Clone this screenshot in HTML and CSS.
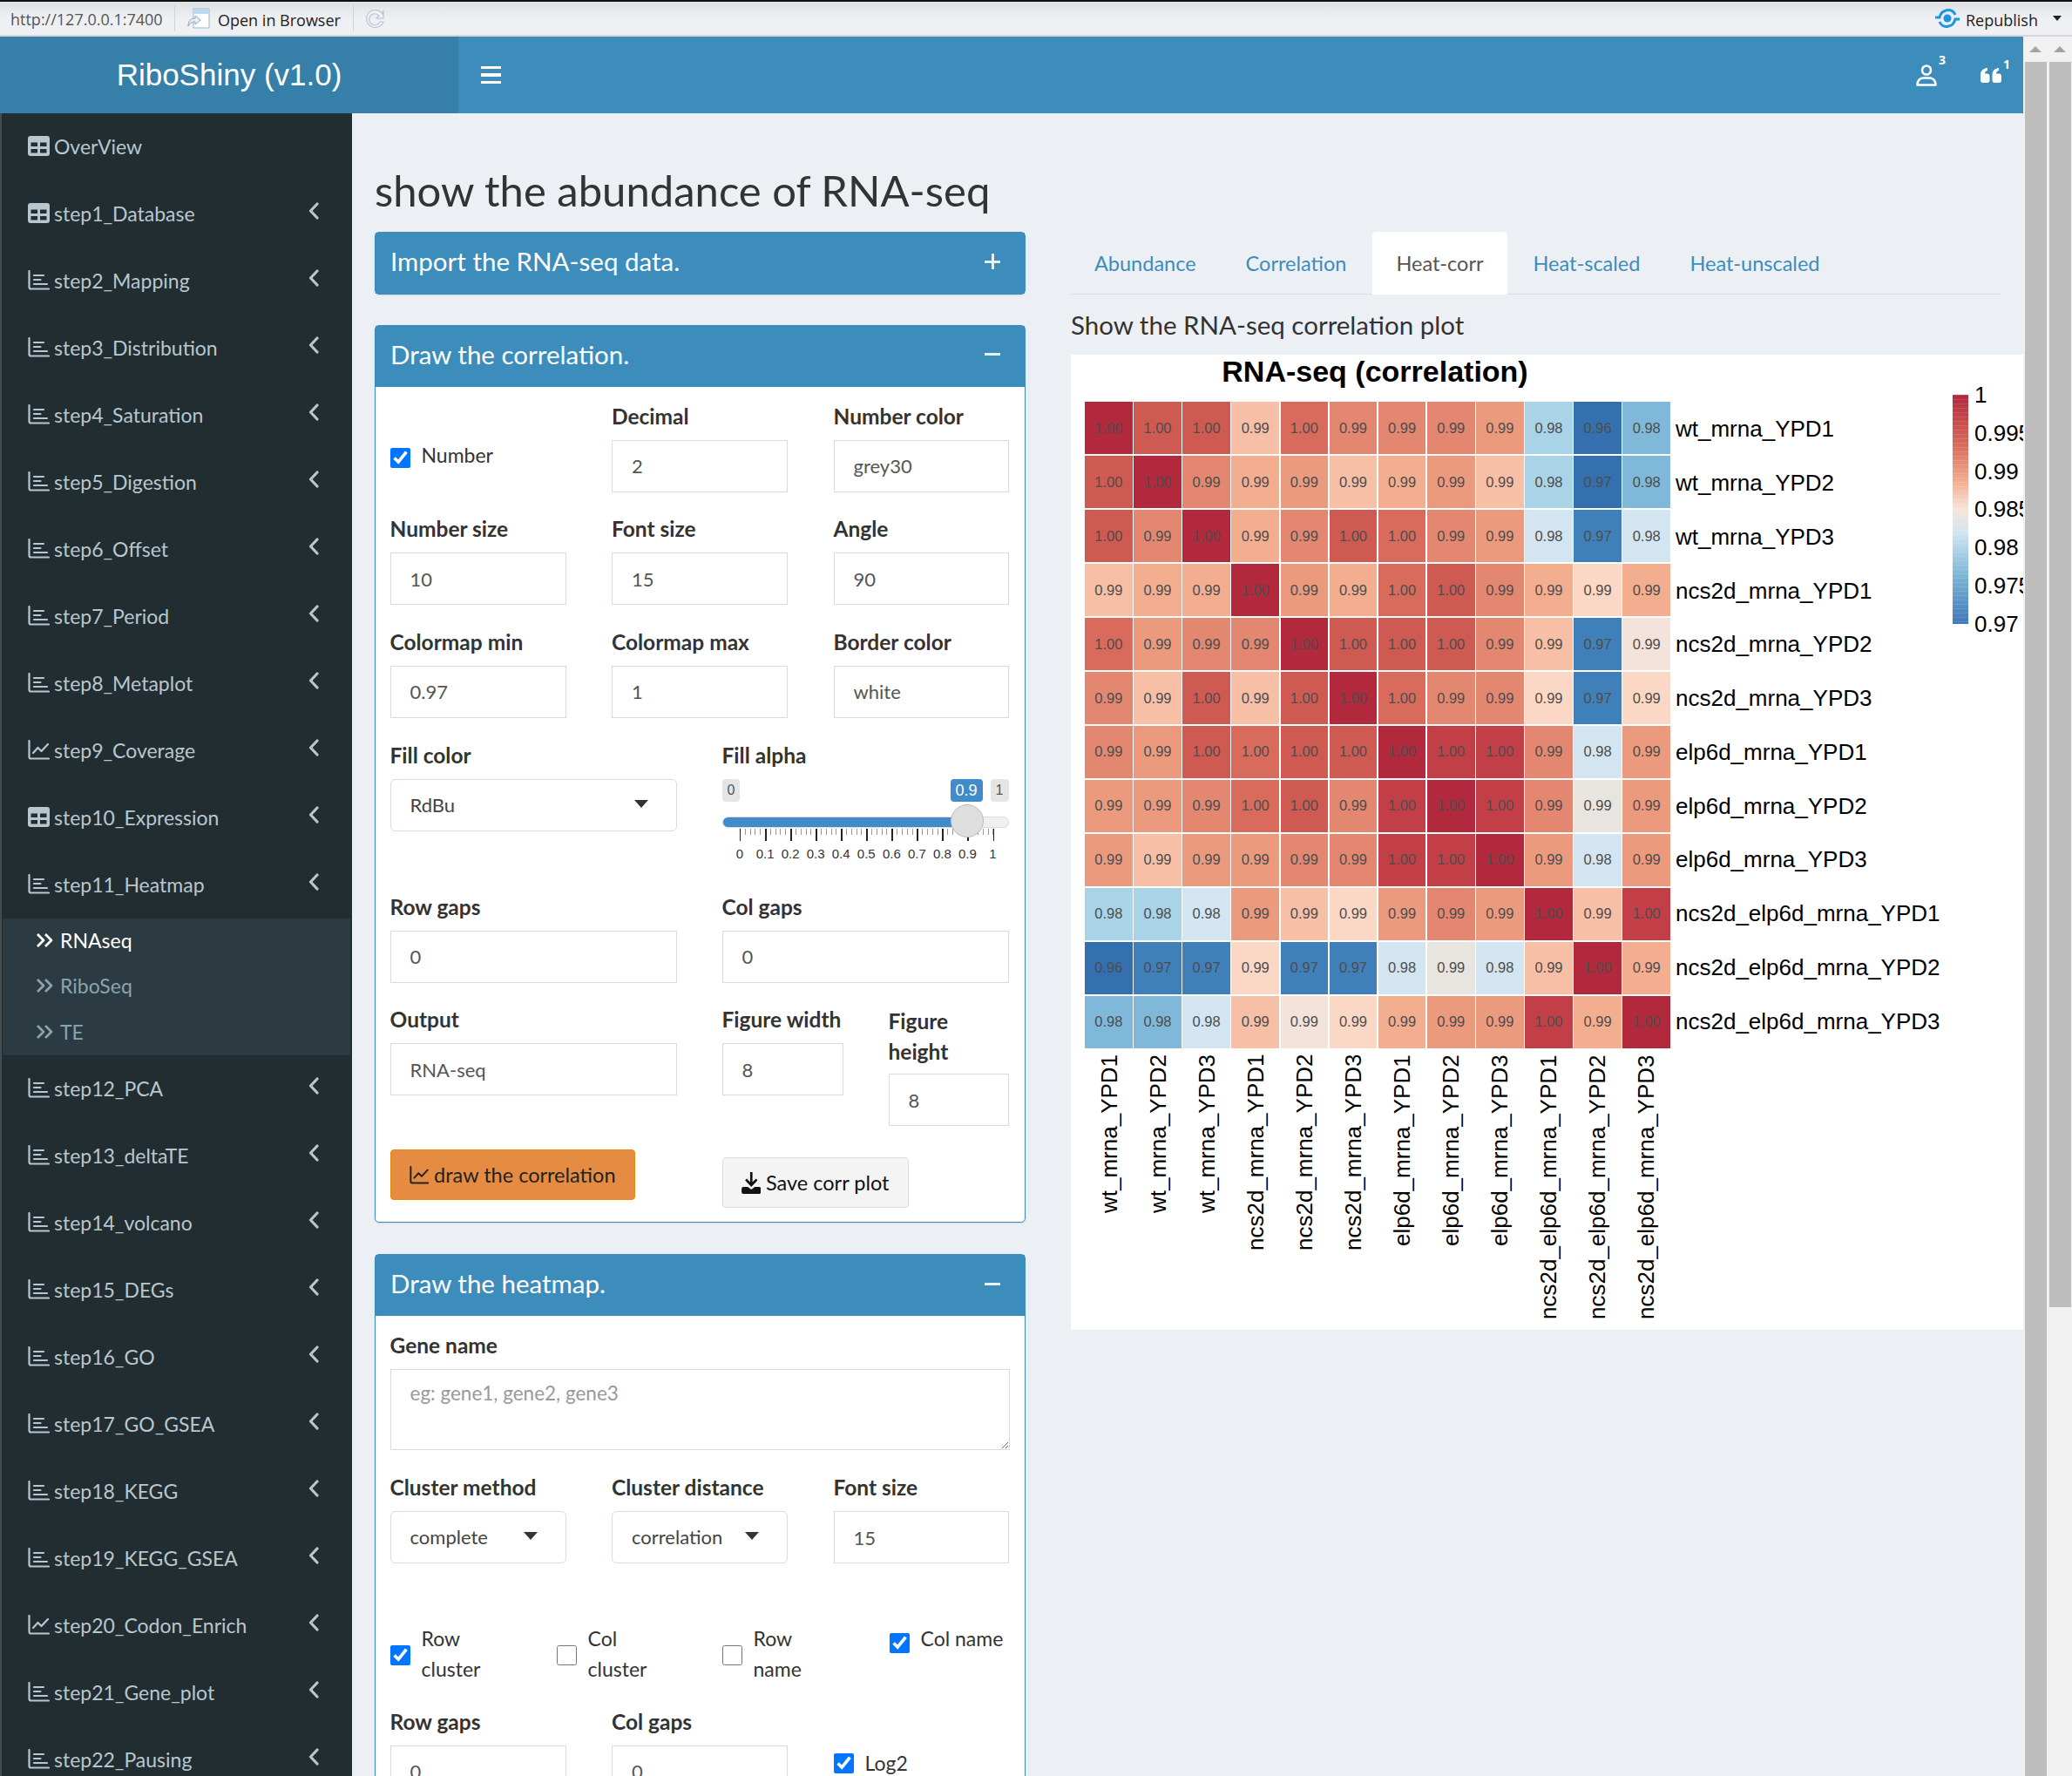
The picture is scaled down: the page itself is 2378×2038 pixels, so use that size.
FILE: index.html
```html
<!DOCTYPE html>
<html lang="en">
  <head>
    <meta charset="UTF-8" />
    <title>RiboShiny (v1.0)</title>
    <link rel="stylesheet" href="styles.css">
  </head>
  <body>
    <svg class="sprite" width="0" height="0">
      <symbol id="i-table" viewBox="0 0 25 23">
        <path fill="currentColor" fill-rule="evenodd" d="M3 0h19a3 3 0 0 1 3 3v17a3 3 0 0 1-3 3H3a3 3 0 0 1-3-3V3a3 3 0 0 1 3-3zM3.500 7.500V12h7.500V7.500zM14 7.500V12h7.500V7.500zM3.500 15v4.500h7.500V15zM14 15v4.500h7.500V15z"/>
      </symbol>
      <symbol id="i-bars" viewBox="0 0 25 23">
        <path fill="none" stroke="currentColor" stroke-width="2.200" stroke-linecap="round" d="M1.500 1v18.500a2 2 0 0 0 2 2H24M7 6h11M7 11h7.500M7 16h15"/>
      </symbol>
      <symbol id="i-line" viewBox="0 0 25 23">
        <path fill="none" stroke="currentColor" stroke-width="2.200" stroke-linecap="round" stroke-linejoin="round" d="M1.500 1v18.500a2 2 0 0 0 2 2H24M6 15l5.500-6 4 4L23 5"/>
      </symbol>
      <symbol id="i-left" viewBox="0 0 12 20">
        <path fill="none" stroke="currentColor" stroke-width="3.200" stroke-linecap="round" stroke-linejoin="round" d="M10 2 2.500 10l7.500 8"/>
      </symbol>
      <symbol id="i-double" viewBox="0 0 22 18">
        <path fill="none" stroke="currentColor" stroke-width="2.800" stroke-linejoin="round" d="M2 2l7 7-7 7M11 2l7 7-7 7"/>
      </symbol>
      <symbol id="i-download" viewBox="0 0 25 28">
        <path fill="currentColor" d="M11 0h3v13l4.500-4.500 2 2L12.500 19l-8-8.500 2-2L11 13zM2.500 19H8l4.500 3.500L17 19h5.500a2.500 2.500 0 0 1 2.500 2.500v4a2.500 2.500 0 0 1-2.500 2.500h-20A2.500 2.500 0 0 1 0 25.500v-4A2.500 2.500 0 0 1 2.500 19z"/>
      </symbol>
    </svg>

    <div class="browser-bar">
      <span class="url">http://127.0.0.1:7400</span>
      <span class="bar-sep"></span>
      <svg class="open-icon" viewBox="0 0 26 26">
        <rect x="7" y="2" width="18" height="22" fill="#fff" stroke="#9db3c9"/>
        <rect x="7" y="2" width="18" height="6" fill="#bcd9f2"/>
        <path d="M1 22c0-6 3-9 8-9v-3l6 5-6 5v-3c-3 0-6 1-8 5z" fill="#e8eef5" stroke="#8ea4b8"/>
      </svg>
      <span class="open-label">Open in Browser</span>
      <span class="bar-sep"></span>
      <svg class="reload-icon" viewBox="0 0 26 26">
        <path d="M22 8a10 10 0 1 0 1 9h-4a6.500 6.500 0 1 1-1-7l-3 3h8V4z" fill="#f1f3f7" stroke="#b9c3d3" stroke-width="1.200"/>
      </svg>
      <span class="bar-grow"></span>
      <svg class="publish-icon" viewBox="0 0 30 24">
        <circle cx="15" cy="12" r="4.500" fill="#1b96e0"/>
        <path d="M1 11h5c2-9 14-12 18-3M29 13h-5c-2 9-14 12-18 3" fill="none" stroke="#1b96e0" stroke-width="3"/>
      </svg>
      <span class="publish-label">Republish</span>
      <span class="publish-caret"></span>
    </div>

    <div class="shell">
      <div class="page">
        <header class="header">
          <div class="logo">RiboShiny (v1.0)</div>
          <nav class="nav">
            <span class="burger"><i></i><i></i><i></i></span>
            <span class="bar-grow"></span>
            <span class="nav-item nav-user">
              <svg viewBox="0 0 24 26" width="24" height="26">
                <circle cx="12" cy="7.500" r="5" fill="none" stroke="#fff" stroke-width="2.600"/>
                <path d="M1.500 24.500c0-5 3-8 6.500-8h8c3.500 0 6.500 3 6.500 8z" fill="none" stroke="#fff" stroke-width="2.600" stroke-linejoin="round"/>
              </svg>
              <b class="nav-badge">3</b>
            </span>
            <span class="nav-item nav-quote">
              <svg viewBox="0 0 24 17" width="24" height="17">
                <path fill="#fff" d="M8 0v3C5.500 3.500 5 5 5 6.500h2.500a3 3 0 0 1 3 3V14a3 3 0 0 1-3 3H3a3 3 0 0 1-3-3V8C0 3 3 .5 8 0zM21 0v3c-2.500.5-3 2-3 3.500h3a3 3 0 0 1 3 3V14a3 3 0 0 1-3 3h-4.500a3 3 0 0 1-3-3V8c0-5 3-7.500 7.500-8z"/>
              </svg>
              <b class="nav-badge">1</b>
            </span>
          </nav>
        </header>

        <div class="main">
          <aside class="sidebar">
            <a class="menu-item"><svg class="menu-icon"><use href="#i-table"/></svg>OverView</a>
            <a class="menu-item"><svg class="menu-icon"><use href="#i-table"/></svg>step1_Database<svg class="chevron"><use href="#i-left"/></svg></a>
            <a class="menu-item"><svg class="menu-icon"><use href="#i-bars"/></svg>step2_Mapping<svg class="chevron"><use href="#i-left"/></svg></a>
            <a class="menu-item"><svg class="menu-icon"><use href="#i-bars"/></svg>step3_Distribution<svg class="chevron"><use href="#i-left"/></svg></a>
            <a class="menu-item"><svg class="menu-icon"><use href="#i-bars"/></svg>step4_Saturation<svg class="chevron"><use href="#i-left"/></svg></a>
            <a class="menu-item"><svg class="menu-icon"><use href="#i-bars"/></svg>step5_Digestion<svg class="chevron"><use href="#i-left"/></svg></a>
            <a class="menu-item"><svg class="menu-icon"><use href="#i-bars"/></svg>step6_Offset<svg class="chevron"><use href="#i-left"/></svg></a>
            <a class="menu-item"><svg class="menu-icon"><use href="#i-bars"/></svg>step7_Period<svg class="chevron"><use href="#i-left"/></svg></a>
            <a class="menu-item"><svg class="menu-icon"><use href="#i-bars"/></svg>step8_Metaplot<svg class="chevron"><use href="#i-left"/></svg></a>
            <a class="menu-item"><svg class="menu-icon"><use href="#i-line"/></svg>step9_Coverage<svg class="chevron"><use href="#i-left"/></svg></a>
            <a class="menu-item"><svg class="menu-icon"><use href="#i-table"/></svg>step10_Expression<svg class="chevron"><use href="#i-left"/></svg></a>
            <a class="menu-item"><svg class="menu-icon"><use href="#i-bars"/></svg>step11_Heatmap<svg class="chevron"><use href="#i-left"/></svg></a>
            <div class="submenu">
              <a class="sub-item active"><svg class="sub-icon"><use href="#i-double"/></svg>RNAseq</a>
              <a class="sub-item"><svg class="sub-icon"><use href="#i-double"/></svg>RiboSeq</a>
              <a class="sub-item"><svg class="sub-icon"><use href="#i-double"/></svg>TE</a>
            </div>
            <a class="menu-item"><svg class="menu-icon"><use href="#i-bars"/></svg>step12_PCA<svg class="chevron"><use href="#i-left"/></svg></a>
            <a class="menu-item"><svg class="menu-icon"><use href="#i-bars"/></svg>step13_deltaTE<svg class="chevron"><use href="#i-left"/></svg></a>
            <a class="menu-item"><svg class="menu-icon"><use href="#i-bars"/></svg>step14_volcano<svg class="chevron"><use href="#i-left"/></svg></a>
            <a class="menu-item"><svg class="menu-icon"><use href="#i-bars"/></svg>step15_DEGs<svg class="chevron"><use href="#i-left"/></svg></a>
            <a class="menu-item"><svg class="menu-icon"><use href="#i-bars"/></svg>step16_GO<svg class="chevron"><use href="#i-left"/></svg></a>
            <a class="menu-item"><svg class="menu-icon"><use href="#i-bars"/></svg>step17_GO_GSEA<svg class="chevron"><use href="#i-left"/></svg></a>
            <a class="menu-item"><svg class="menu-icon"><use href="#i-bars"/></svg>step18_KEGG<svg class="chevron"><use href="#i-left"/></svg></a>
            <a class="menu-item"><svg class="menu-icon"><use href="#i-bars"/></svg>step19_KEGG_GSEA<svg class="chevron"><use href="#i-left"/></svg></a>
            <a class="menu-item"><svg class="menu-icon"><use href="#i-line"/></svg>step20_Codon_Enrich<svg class="chevron"><use href="#i-left"/></svg></a>
            <a class="menu-item"><svg class="menu-icon"><use href="#i-bars"/></svg>step21_Gene_plot<svg class="chevron"><use href="#i-left"/></svg></a>
            <a class="menu-item"><svg class="menu-icon"><use href="#i-bars"/></svg>step22_Pausing<svg class="chevron"><use href="#i-left"/></svg></a>
          </aside>

          <section class="content">
            <h1>show the abundance of RNA-seq</h1>
            <div class="columns">
              <div class="col-left">
                <div class="box box-import">
                  <div class="box-header"><h3>Import the RNA-seq data.</h3><span class="plus"></span></div>
                </div>

                <div class="box">
                  <div class="box-header"><h3>Draw the correlation.</h3><span class="minus"></span></div>
                  <div class="box-body">
                    <div class="row three">
                      <label class="check check-number"><input type="checkbox" checked /><span>Number</span></label>
                      <div class="field"><label>Decimal</label><input type="text" value="2" /></div>
                      <div class="field"><label>Number color</label><input type="text" value="grey30" /></div>
                    </div>
                    <div class="row three">
                      <div class="field"><label>Number size</label><input type="text" value="10" /></div>
                      <div class="field"><label>Font size</label><input type="text" value="15" /></div>
                      <div class="field"><label>Angle</label><input type="text" value="90" /></div>
                    </div>
                    <div class="row three">
                      <div class="field"><label>Colormap min</label><input type="text" value="0.97" /></div>
                      <div class="field"><label>Colormap max</label><input type="text" value="1" /></div>
                      <div class="field"><label>Border color</label><input type="text" value="white" /></div>
                    </div>
                    <div class="row two row-slider">
                      <div class="field">
                        <label>Fill color</label>
                        <div class="select">RdBu</div>
                      </div>
                      <div class="field">
                        <label>Fill alpha</label>
                        <div class="slider">
                          <div class="slider-limits"><span>0</span><span>1</span></div>
                          <span class="slider-value">0.9</span>
                          <div class="slider-track"><div class="slider-fill"></div></div>
                          <span class="slider-handle"></span>
                          <div class="slider-ticks"></div>
                          <div class="slider-labels">
                            <span>0</span><span>0.1</span><span>0.2</span><span>0.3</span><span>0.4</span><span>0.5</span><span>0.6</span><span>0.7</span><span>0.8</span><span>0.9</span><span>1</span>
                          </div>
                        </div>
                      </div>
                    </div>
                    <div class="row two">
                      <div class="field"><label>Row gaps</label><input type="text" value="0" /></div>
                      <div class="field"><label>Col gaps</label><input type="text" value="0" /></div>
                    </div>
                    <div class="row two row-output">
                      <div class="field"><label>Output</label><input type="text" value="RNA-seq" /></div>
                      <div class="fig-fields">
                        <div class="field"><label>Figure width</label><input type="text" value="8" /></div>
                        <div class="field field-tall"><label>Figure<br>height</label><input type="text" value="8" /></div>
                      </div>
                    </div>
                    <div class="row two row-buttons">
                      <div><button class="btn btn-orange"><svg class="btn-icon"><use href="#i-line"/></svg>draw the correlation</button></div>
                      <div><button class="btn btn-plain"><svg class="btn-icon"><use href="#i-download"/></svg>Save corr plot</button></div>
                    </div>
                  </div>
                </div>

                <div class="box">
                  <div class="box-header"><h3>Draw the heatmap.</h3><span class="minus"></span></div>
                  <div class="box-body">
                    <div class="field field-gene">
                      <label>Gene name</label>
                      <textarea placeholder="eg: gene1, gene2, gene3"></textarea>
                    </div>
                    <div class="row three">
                      <div class="field"><label>Cluster method</label><div class="select">complete</div></div>
                      <div class="field"><label>Cluster distance</label><div class="select">correlation</div></div>
                      <div class="field"><label>Font size</label><input type="text" value="15" /></div>
                    </div>
                    <div class="row four">
                      <label class="check"><input type="checkbox" checked /><span>Row<br>cluster</span></label>
                      <label class="check"><input type="checkbox" /><span>Col<br>cluster</span></label>
                      <label class="check"><input type="checkbox" /><span>Row<br>name</span></label>
                      <label class="check check-top"><input type="checkbox" checked /><span>Col name</span></label>
                    </div>
                    <div class="row three">
                      <div class="field"><label>Row gaps</label><input type="text" value="0" /></div>
                      <div class="field"><label>Col gaps</label><input type="text" value="0" /></div>
                      <label class="check check-log"><input type="checkbox" checked /><span>Log2</span></label>
                    </div>
                  </div>
                </div>
              </div>

              <div class="col-right">
                <ul class="tabs">
                  <li>Abundance</li>
                  <li>Correlation</li>
                  <li class="active">Heat-corr</li>
                  <li>Heat-scaled</li>
                  <li>Heat-unscaled</li>
                </ul>
                <h4>Show the RNA-seq correlation plot</h4>
                <div class="plot">
                  <div class="plot-left">
                    <div class="plot-title">RNA-seq (correlation)</div>
                    <div class="plot-body">
                      <div class="heat">
                        <div class="d0">1.00</div><div class="d2">1.00</div><div class="d2">1.00</div><div class="d7">0.99</div><div class="d3">1.00</div><div class="d4">0.99</div><div class="d4">0.99</div><div class="d4">0.99</div><div class="d5">0.99</div><div class="b2">0.98</div><div class="b5">0.96</div><div class="b3">0.98</div>
                        <div class="d2">1.00</div><div class="d0">1.00</div><div class="d4">0.99</div><div class="d6">0.99</div><div class="d5">0.99</div><div class="d7">0.99</div><div class="d6">0.99</div><div class="d5">0.99</div><div class="d7">0.99</div><div class="b2">0.98</div><div class="b5">0.97</div><div class="b3">0.98</div>
                        <div class="d2">1.00</div><div class="d4">0.99</div><div class="d0">1.00</div><div class="d6">0.99</div><div class="d4">0.99</div><div class="d2">1.00</div><div class="d3">1.00</div><div class="d4">0.99</div><div class="d5">0.99</div><div class="b1">0.98</div><div class="b4">0.97</div><div class="b1">0.98</div>
                        <div class="d7">0.99</div><div class="d6">0.99</div><div class="d6">0.99</div><div class="d0">1.00</div><div class="d5">0.99</div><div class="d6">0.99</div><div class="d3">1.00</div><div class="d2">1.00</div><div class="d4">0.99</div><div class="d6">0.99</div><div class="d8">0.99</div><div class="d6">0.99</div>
                        <div class="d3">1.00</div><div class="d5">0.99</div><div class="d4">0.99</div><div class="d4">0.99</div><div class="d0">1.00</div><div class="d2">1.00</div><div class="d2">1.00</div><div class="d2">1.00</div><div class="d4">0.99</div><div class="d7">0.99</div><div class="b4">0.97</div><div class="d9">0.99</div>
                        <div class="d4">0.99</div><div class="d7">0.99</div><div class="d2">1.00</div><div class="d7">0.99</div><div class="d2">1.00</div><div class="d0">1.00</div><div class="d3">1.00</div><div class="d4">0.99</div><div class="d4">0.99</div><div class="d8">0.99</div><div class="b4">0.97</div><div class="d8">0.99</div>
                        <div class="d4">0.99</div><div class="d5">0.99</div><div class="d2">1.00</div><div class="d3">1.00</div><div class="d2">1.00</div><div class="d2">1.00</div><div class="d0">1.00</div><div class="d1">1.00</div><div class="d1">1.00</div><div class="d4">0.99</div><div class="b1">0.98</div><div class="d5">0.99</div>
                        <div class="d5">0.99</div><div class="d5">0.99</div><div class="d4">0.99</div><div class="d3">1.00</div><div class="d2">1.00</div><div class="d4">0.99</div><div class="d1">1.00</div><div class="d0">1.00</div><div class="d1">1.00</div><div class="d4">0.99</div><div class="n0">0.99</div><div class="d5">0.99</div>
                        <div class="d5">0.99</div><div class="d7">0.99</div><div class="d5">0.99</div><div class="d5">0.99</div><div class="d4">0.99</div><div class="d4">0.99</div><div class="d1">1.00</div><div class="d1">1.00</div><div class="d0">1.00</div><div class="d5">0.99</div><div class="b1">0.98</div><div class="d5">0.99</div>
                        <div class="b2">0.98</div><div class="b2">0.98</div><div class="b1">0.98</div><div class="d5">0.99</div><div class="d7">0.99</div><div class="d8">0.99</div><div class="d5">0.99</div><div class="d4">0.99</div><div class="d5">0.99</div><div class="d0">1.00</div><div class="d7">0.99</div><div class="d1">1.00</div>
                        <div class="b5">0.96</div><div class="b4">0.97</div><div class="b4">0.97</div><div class="d8">0.99</div><div class="b4">0.97</div><div class="b4">0.97</div><div class="b1">0.98</div><div class="n0">0.99</div><div class="b1">0.98</div><div class="d7">0.99</div><div class="d0">1.00</div><div class="d6">0.99</div>
                        <div class="b3">0.98</div><div class="b3">0.98</div><div class="b1">0.98</div><div class="d7">0.99</div><div class="d9">0.99</div><div class="d8">0.99</div><div class="d6">0.99</div><div class="d5">0.99</div><div class="d5">0.99</div><div class="d1">1.00</div><div class="d6">0.99</div><div class="d0">1.00</div>
                      </div>
                      <div class="row-names">
                        <span>wt_mrna_YPD1</span><span>wt_mrna_YPD2</span><span>wt_mrna_YPD3</span>
                        <span>ncs2d_mrna_YPD1</span><span>ncs2d_mrna_YPD2</span><span>ncs2d_mrna_YPD3</span>
                        <span>elp6d_mrna_YPD1</span><span>elp6d_mrna_YPD2</span><span>elp6d_mrna_YPD3</span>
                        <span>ncs2d_elp6d_mrna_YPD1</span><span>ncs2d_elp6d_mrna_YPD2</span><span>ncs2d_elp6d_mrna_YPD3</span>
                      </div>
                      <div class="col-names">
                        <span>wt_mrna_YPD1</span><span>wt_mrna_YPD2</span><span>wt_mrna_YPD3</span>
                        <span>ncs2d_mrna_YPD1</span><span>ncs2d_mrna_YPD2</span><span>ncs2d_mrna_YPD3</span>
                        <span>elp6d_mrna_YPD1</span><span>elp6d_mrna_YPD2</span><span>elp6d_mrna_YPD3</span>
                        <span>ncs2d_elp6d_mrna_YPD1</span><span>ncs2d_elp6d_mrna_YPD2</span><span>ncs2d_elp6d_mrna_YPD3</span>
                      </div>
                    </div>
                  </div>
                  <div class="legend">
                    <div class="legend-bar"></div>
                    <div class="legend-labels">
                      <span>1</span><span>0.995</span><span>0.99</span><span>0.985</span><span>0.98</span><span>0.975</span><span>0.97</span>
                    </div>
                  </div>
                </div>
              </div>
            </div>
          </section>
        </div>
      </div>

      <div class="scrolls">
        <div class="scroll"><span class="scroll-arrow"></span><div class="thumb thumb-full"></div></div>
        <div class="scroll"><span class="scroll-arrow"></span><div class="thumb thumb-short"></div></div>
      </div>
    </div>
  </body>
</html>
```

FILE: styles.css
```css
* {
  box-sizing: border-box;
}
body {
  margin: 0;
  width: 2378px;
  height: 2038px;
  overflow: hidden;
  font-family: Lato, "Open Sans", sans-serif;
  font-size: 22px;
  color: #333;
  background-color: #ecf0f5;
}
.sprite {
  position: absolute;
}

/* Viewer toolbar */
.browser-bar {
  display: flex;
  align-items: center;
  height: 42px;
  padding-left: 12px;
  border-top: 2px solid #111;
  border-bottom: 2px solid #d4d6da;
  background: linear-gradient(#dfe0e3, #eef0f3 50%);
  font-family: "Open Sans", sans-serif;
  font-size: 18px;
  color: #222;
}
.url {
  color: #555;
  width: 174px;
  margin-top: 1px;
  white-space: nowrap;
}
.bar-sep {
  width: 1px;
  height: 30px;
  margin-left: 14px;
  background-color: #d0d2d6;
}
.open-icon {
  width: 26px;
  height: 26px;
  margin-left: 14px;
}
.open-label {
  margin: 3px 0 0 9px;
  width: 141px;
  white-space: nowrap;
}
.reload-icon {
  width: 26px;
  height: 26px;
  margin-left: 11px;
}
.bar-grow {
  flex: 1;
}
.publish-icon {
  width: 30px;
  height: 24px;
}
.publish-label {
  margin: 3px 0 0 6px;
  font-size: 18px;
}
.publish-caret {
  width: 0;
  height: 0;
  margin: 0 12px 0 17px;
  border: 5px solid transparent;
  border-top: 6px solid #222;
  border-bottom: 0;
}

/* Layout */
.shell {
  display: flex;
  height: 1996px;
}
.page {
  width: 2322px;
  height: 100%;
}
.header {
  display: flex;
  height: 88px;
  color: #fff;
}
.logo {
  width: 526px;
  line-height: 88px;
  text-align: center;
  font-family: "Liberation Sans", Arial, sans-serif;
  font-size: 35px;
  background-color: #367fa9;
}
.nav {
  flex: 1;
  display: flex;
  align-items: center;
  background-color: #3c8dbc;
}
.burger {
  display: flex;
  flex-direction: column;
  gap: 5px;
  width: 23px;
  margin-left: 26px;
}
.burger i {
  height: 3.500px;
  background-color: #fff;
}
.nav-item {
  position: relative;
  display: flex;
  align-items: center;
}
.nav-user {
  margin-right: 50px;
}
.nav-quote {
  margin-right: 25px;
}
.nav-badge {
  position: absolute;
  top: -11px;
  right: -10px;
  font-family: "Open Sans", sans-serif;
  font-size: 14px;
  line-height: 14px;
}
.main {
  display: flex;
  height: 1908px;
}

/* Sidebar */
.sidebar {
  flex: none;
  width: 404px;
  height: 100%;
  overflow: hidden;
  border-left: 2px solid #444c50;
  background-color: #222d32;
  color: #b8c7ce;
  font-size: 23px;
}
.menu-item {
  display: flex;
  align-items: center;
  height: 77px;
  padding: 0 0 2px 30px;
  white-space: nowrap;
}
.menu-icon {
  width: 25px;
  height: 23px;
  margin-right: 5px;
}
.chevron {
  width: 12px;
  height: 20px;
  margin-left: auto;
  margin-right: 38px;
  margin-top: -6px;
}
.submenu {
  margin: 0 2px 0 1px;
  height: 157px;
  background-color: #2c3b41;
}
.sub-item {
  display: flex;
  align-items: center;
  height: 52.300px;
  padding: 0 0 2px 38px;
  color: #8aa4af;
}
.sub-item.active {
  color: #fff;
}
.sub-icon {
  width: 22px;
  height: 18px;
  margin-right: 6px;
}

/* Content */
.content {
  flex: 1;
  min-width: 0;
  height: 100%;
  overflow: hidden;
  padding: 58px 0 0 26px;
}
h1 {
  margin: 0 0 18px;
  font-size: 49px;
  font-weight: 400;
  line-height: 60px;
}
.columns {
  display: flex;
  gap: 52px;
}
.col-left {
  flex: none;
  width: 747px;
}
.col-right {
  flex: none;
  width: 1093px;
}

/* Boxes */
.box {
  margin-bottom: 36px;
  border: 1.500px solid #3c8dbc;
  border-radius: 5px;
  background-color: #fff;
  box-shadow: 0 1px 2px rgba(0, 0, 0, 0.1);
}
.box-import {
  margin-bottom: 34.500px;
}
.box-header {
  display: flex;
  align-items: center;
  justify-content: space-between;
  height: 70px;
  padding: 0 28px 0 17px;
  background-color: #3c8dbc;
  color: #fff;
}
.box-header h3 {
  margin: -5px 0 0;
  font-size: 29.500px;
  font-weight: 400;
}
.plus,
.minus {
  position: relative;
  width: 18px;
  height: 3px;
  background-color: #e8f1f7;
  margin-top: -4px;
}
.plus::after {
  content: "";
  position: absolute;
  left: 7.500px;
  top: -7.500px;
  width: 3px;
  height: 18px;
  background-color: #e8f1f7;
}
.box-body {
  padding: 21px 17px 0 16.500px;
}
.row {
  display: grid;
  column-gap: 52.500px;
}
.row.three {
  grid-template-columns: 202px 202px 201px;
}
.row.two {
  grid-template-columns: repeat(2, 329px);
  column-gap: 52px;
}
.row.four {
  grid-template-columns: 191px 190px 192px 137px;
  column-gap: 0;
  height: 139px;
  padding-top: 39px;
  align-items: start;
}
.field {
  margin-bottom: 29.700px;
}
.field label {
  display: block;
  margin-bottom: 14px;
  font-size: 24.500px;
  line-height: 26px;
  font-weight: 700;
}
.field-tall label {
  margin: -3px 0 8px;
  line-height: 35px;
}
input[type="text"],
textarea {
  display: block;
  width: 100%;
  height: 60px;
  padding: 0 22px;
  border: 1.500px solid #d8dbe0;
  border-radius: 0;
  background-color: #fff;
  color: #555;
  font: inherit;
}
textarea {
  padding-top: 12px;
  line-height: 30px;
}
textarea::placeholder {
  color: #999;
  font-size: 22.500px;
}
.select {
  position: relative;
  height: 60px;
  padding-left: 22px;
  line-height: 57px;
  border: 1.500px solid #d8dbe0;
  border-radius: 6px;
  background-color: #fff;
  color: #444;
}
.select::after {
  content: "";
  position: absolute;
  top: 23px;
  right: 32px;
  border: 8px solid transparent;
  border-top: 9px solid #333;
  border-bottom: 0;
}
.row-slider {
  height: 174px;
}
.row-output {
  height: 162px;
}
.row-output .field {
  margin-bottom: 0;
}
.fig-fields {
  display: grid;
  grid-template-columns: 139px 138px;
  column-gap: 52px;
}
.check {
  display: flex;
  align-items: center;
  gap: 13px;
  font-size: 23px;
  line-height: 35px;
}
.check input {
  flex: none;
  width: 23px;
  height: 23px;
  margin: 0;
  accent-color: #0075ff;
}
.check-number {
  align-self: start;
  margin-top: 46px;
}
.check-number span {
  margin-top: -6px;
}
.row.four .check input {
  margin-top: 4px;
}
.check-top {
  align-items: flex-start;
  white-space: nowrap;
}
.row.four .check-top input {
  margin-top: 11px;
}
.check-log {
  align-self: start;
  margin-top: 43px;
}

/* Slider */
.slider {
  position: relative;
  height: 100px;
  width: 329px;
}
.slider-limits {
  display: flex;
  justify-content: space-between;
}
.slider-limits span,
.slider-value {
  height: 26px;
  padding: 0 6px;
  border-radius: 4px;
  background-color: #e5e5e5;
  color: #555;
  font-family: "Liberation Sans", sans-serif;
  font-size: 16px;
  line-height: 26px;
}
.slider-value {
  position: absolute;
  left: 262px;
  top: 0;
  width: 37px;
  padding: 0;
  text-align: center;
  background-color: #428bca;
  color: #fff;
  font-size: 18px;
}
.slider-track {
  margin-top: 17px;
  height: 13px;
  border: 1px solid #dcdcdc;
  border-radius: 7px;
  background-color: #f0f0f0;
  overflow: hidden;
}
.slider-fill {
  width: 84%;
  height: 100%;
  background-color: #428bca;
}
.slider-handle {
  position: absolute;
  left: 262px;
  top: 29px;
  width: 38px;
  height: 38px;
  border: 1px solid #bbb;
  border-radius: 50%;
  background-color: #dedede;
}
.slider-ticks {
  height: 14px;
  margin: 1px 0 0 20px;
  width: 292px;
  background:
    repeating-linear-gradient(90deg, #222 0 1.500px, transparent 1.500px 29.050px) 0 0 / 100% 14px no-repeat,
    repeating-linear-gradient(90deg, #999 0 1px, transparent 1px 5.810px) 0 0 / 100% 7px no-repeat;
}
.slider-labels {
  display: flex;
  margin: 6px 0 0 6px;
  font-family: "Liberation Sans", sans-serif;
  font-size: 15px;
  color: #333;
}
.slider-labels span {
  width: 29.050px;
  text-align: center;
}

/* Buttons */
.row-buttons {
  height: 83px;
}
.btn {
  display: inline-flex;
  align-items: center;
  gap: 6px;
  height: 58px;
  padding: 0 21px;
  border-radius: 4px;
  color: #111;
  font: inherit;
  font-size: 23.500px;
  white-space: nowrap;
}
.btn-icon {
  width: 25px;
  height: 25px;
}
.btn-orange {
  width: 281px;
  border: 1px solid #e08e0b;
  background-color: #e68c42;
  color: #222;
}
.btn-plain {
  width: 214px;
  margin-top: 9px;
  border: 1.500px solid #ddd;
  background-color: #f4f4f4;
}
.field-gene textarea {
  height: 93px;
}
.field-gene {
  margin-bottom: 30px;
}

/* Tabs */
.tabs {
  display: flex;
  gap: 3px;
  width: 1067px;
  height: 72px;
  margin: 0;
  padding: 0;
  list-style: none;
  border-bottom: 1.500px solid #dbdfe5;
  color: #3c8dbc;
  font-size: 23.500px;
}
.tabs li {
  height: 72px;
  padding: 0 27px;
  line-height: 72px;
  border-radius: 5px 5px 0 0;
}
.tabs li.active {
  background-color: #fff;
  color: #555;
}
h4 {
  margin: 0;
  padding: 15px 0 14px;
  font-size: 29.500px;
  font-weight: 400;
  line-height: 40px;
  color: #333;
}

/* Plot */
.plot {
  display: flex;
  height: 1119px;
  padding-left: 16px;
  overflow: hidden;
  background-color: #fff;
  font-family: "Liberation Sans", Arial, sans-serif;
  color: #000;
}
.plot-left {
  flex: none;
}
.plot-title {
  width: 666px;
  margin: -1px 0 15px;
  font-size: 34px;
  font-weight: 700;
  line-height: 40px;
  text-align: center;
}
.plot-body {
  display: grid;
  grid-template-columns: 672px 305px;
  column-gap: 6px;
}
.heat {
  display: grid;
  grid-template-columns: repeat(12, 1fr);
  grid-template-rows: repeat(12, 1fr);
  gap: 1.500px;
  height: 742px;
}
.heat div {
  display: flex;
  align-items: center;
  justify-content: center;
  font-size: 16.500px;
  color: #4d4d4d;
}
.d0 { background-color: #b2283c; }
.d1 { background-color: #c23f47; }
.d2 { background-color: #cf5a52; }
.d3 { background-color: #d96b5c; }
.d4 { background-color: #e38770; }
.d5 { background-color: #ec9a7e; }
.d6 { background-color: #f3ae90; }
.d7 { background-color: #f7bfa5; }
.d8 { background-color: #fbd8c5; }
.d9 { background-color: #f3e3da; }
.n0 { background-color: #e8e4e0; }
.b1 { background-color: #d3e5f0; }
.b2 { background-color: #a9d3e6; }
.b3 { background-color: #7fb8d8; }
.b4 { background-color: #3f80bb; }
.b5 { background-color: #3470b0; }
.row-names {
  display: grid;
  grid-template-rows: repeat(12, 1fr);
  padding-top: 1px;
  font-size: 26px;
  white-space: nowrap;
}
.row-names span {
  align-self: center;
}
.col-names {
  display: flex;
  margin-top: 7px;
  font-size: 26px;
}
.col-names span {
  width: 56px;
  height: 305px;
  line-height: 56px;
  writing-mode: vertical-rl;
  transform: rotate(180deg);
  text-align: end;
  white-space: nowrap;
}
.legend {
  display: flex;
  flex: none;
  padding-top: 46px;
  margin-left: 13px;
}
.legend-bar {
  width: 18px;
  height: 263px;
  background:
    repeating-linear-gradient(rgba(255, 255, 255, 0.12) 0 1px, transparent 1px 5px),
    linear-gradient(#b2283c, #d96b5c 22%, #f3ae90 38%, #f7e4da 50%, #d3e5f0 60%, #7fb8d8 78%, #3f78b8);
}
.legend-labels {
  display: flex;
  flex-direction: column;
  margin: -22px 0 0 7px;
  font-size: 26px;
}
.legend-labels span {
  height: 43.830px;
  line-height: 44px;
}

/* Scrollbars */
.scrolls {
  display: flex;
  width: 56px;
  height: 100%;
  background-color: #f1f1f1;
}
.scroll {
  position: relative;
  width: 28px;
  padding: 29px 0 0 2px;
}
.scroll-arrow {
  position: absolute;
  top: 11px;
  left: 7px;
  border: 7px solid transparent;
  border-bottom: 7px solid #a3a3a3;
  border-top: 0;
}
.thumb {
  width: 25px;
  background-color: #bebebe;
}
.thumb-full {
  height: 1967px;
}
.thumb-short {
  height: 1429px;
}
```
